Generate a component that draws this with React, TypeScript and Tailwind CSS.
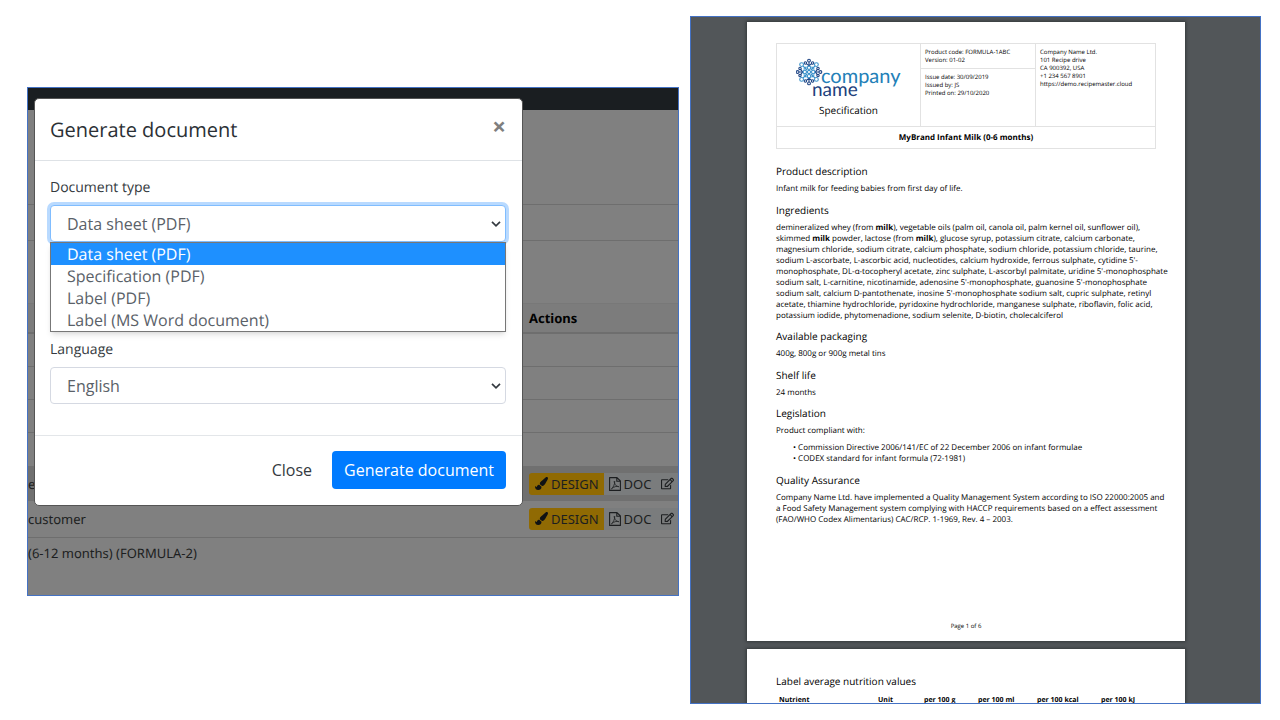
import { FaPaintBrush, FaRegEdit } from "react-icons/fa";

const documentTypes = [
  "Data sheet (PDF)",
  "Specification (PDF)",
  "Label (PDF)",
  "Label (MS Word document)",
];

function Chevron() {
  return (
    <svg viewBox="0 0 10 8" className="pointer-events-none absolute top-1/2 right-[5px] h-2 w-[10px] -translate-y-1/2" fill="none" stroke="#343a40" strokeWidth="1.7">
      <path d="M1 1.8 5 5.8 9 1.8" />
    </svg>
  );
}

function PdfIcon() {
  return (
    <svg viewBox="0 0 12 14" className="h-[14px] w-3" fill="none" stroke="currentColor" strokeLinejoin="round">
      <path d="M.6.6H8L11.4 4V13.4H.6ZM7.8.6V4.2H11.4" strokeWidth="1.1" />
      <path d="M2.4 11.8C4 11 6 7 5.7 4.3C5.4 3.4 4.9 4.6 5.6 6.2C6.4 8.4 8 9.8 9.8 9.7C9 8.8 5.2 9.3 2.4 11.8Z" strokeWidth=".8" />
    </svg>
  );
}

function Actions() {
  return (
    <div className="flex h-[22px] w-max items-stretch">
      <button className="flex items-center gap-[3px] rounded-l-[3px] bg-[#906a03] pr-[5px] pl-1.5">
        <FaPaintBrush className="size-[13px] text-[#101214]" />
        DESIGN
      </button>
      <button className="flex items-center gap-[3px] bg-[#7a7c7d] px-[5px]">
        <PdfIcon />
        DOC
      </button>
      <button aria-label="Edit" className="flex items-center bg-[#7a7c7d] px-[5px]">
        <FaRegEdit className="size-[13px]" />
      </button>
    </div>
  );
}

function Backdrop() {
  return (
    <div className="w-full font-['Noto_Sans',sans-serif] text-[13px] leading-5 text-[#1c1e20] [text-rendering:geometricPrecision]">
      <div className="h-[22px] bg-[#1a1e21]" />
      <div className="h-[95px] border-b border-[#6e6e6e]" />
      <div className="h-9 border-b border-[#6e6e6e]" />
      <div className="h-[63px] border-b border-[#787878]" />
      <table className="w-full table-fixed border-collapse text-left">
        <colgroup>
          <col />
          <col className="w-[149px]" />
        </colgroup>
        <thead>
          <tr className="h-[29px] border-b-2 border-[#6e6e6e] bg-[#7c7c7c]">
            <td />
            <th className="font-bold text-black">Actions</th>
          </tr>
        </thead>
        <tbody>
          <tr className="h-[33px] border-b border-[#6e6e6e]"><td /><td /></tr>
          <tr className="h-[33px] border-b border-[#6e6e6e]"><td /><td /></tr>
          <tr className="h-[33px] border-b border-[#6e6e6e]"><td /><td /></tr>
          <tr className="h-[34px]"><td /><td /></tr>
          <tr className="h-[35px] bg-[#707070]"><td>er</td><td><Actions /></td></tr>
          <tr className="h-9 border-b border-[#6e6e6e]"><td>customer</td><td><Actions /></td></tr>
          <tr className="h-[31px]"><td>(6-12 months) (FORMULA-2)</td><td /></tr>
        </tbody>
      </table>
    </div>
  );
}

const labelClass = "block text-sm leading-6 text-[#343a40]";
const selectClass =
  "h-[37px] w-full appearance-none rounded border bg-white pl-4 text-base text-[#5a6168] outline-none";

function Modal() {
  return (
    <div role="dialog" aria-labelledby="dialog-title" className="absolute top-[10px] left-[6px] w-[489px] rounded-[5px] border border-[#555] bg-white font-['Open_Sans',sans-serif] [text-rendering:geometricPrecision]">
      <header className="flex h-[62px] items-center justify-between border-b border-[#dee2e6] pr-4 pl-[15px]">
        <h2 id="dialog-title" className="text-xl text-[#2b3035]">Generate document</h2>
        <button aria-label="Close dialog" className="pb-2 text-2xl leading-7 font-bold text-[#7f7f7f]">×</button>
      </header>
      <div className="pt-[15px] pr-4 pb-[31px] pl-[15px]">
        <div className="relative">
          <label htmlFor="type" className={labelClass}>Document type</label>
          <div className="relative mt-[5px]">
            <select id="type" className={selectClass + " border-[#80bdff] ring-3 ring-[#b9daff]"}>
              {documentTypes.map((t) => <option key={t}>{t}</option>)}
            </select>
            <Chevron />
          </div>
          <ul role="listbox" className="absolute top-full z-10 w-full border border-[#777] bg-white text-base leading-[22px] text-[#5a6168] shadow-md">
            {documentTypes.map((t, i) => (
              <li key={t} role="option" aria-selected={i === 0} className={i === 0 ? "bg-[#1e90ff] pl-4 text-white" : "pl-4"}>{t}</li>
            ))}
          </ul>
        </div>
        <div className="mt-3.5 pt-[30px]">
          <select aria-label="Format" className={selectClass + " border-[#ced4da]"} />
        </div>
        <div className="mt-[15px]">
          <label htmlFor="language" className={labelClass}>Language</label>
          <div className="relative mt-[5px]">
            <select id="language" className={selectClass + " border-[#d5d9e2]"}>
              <option>English</option>
            </select>
            <Chevron />
          </div>
        </div>
      </div>
      <footer className="flex h-[70px] items-center justify-end gap-2 border-t border-[#e3e6e9] pr-4 pb-0.5 pl-[15px] text-base">
        <button className="px-3 text-[#343a40]">Close</button>
        <button className="h-[38px] rounded bg-[#007bff] px-3 text-white">Generate document</button>
      </footer>
    </div>
  );
}

function Logo() {
  const quarters = [0, 90, 180, 270];
  return (
    <svg viewBox="0 0 106 44" className="h-11 w-[106px]" role="img" aria-label="company name">
      <g transform="translate(13 14)" fill="none" strokeWidth="1.1">
        {quarters.map((a) => (
          <g key={a} transform={`rotate(${a})`}>
            <g stroke="#1f4585">
              <circle cy="-11.4" r="1.4" />
              <path d="M0-10V-6.5M-2.6-8.4 0-6.2 2.6-8.4" />
              <circle cx="-3.6" cy="-9" r="1.2" />
              <circle cx="3.6" cy="-9" r="1.2" />
            </g>
            <g stroke="#3d93cb">
              <circle cx="7.4" cy="-7.4" r="1.9" />
              <path d="M6-6 2-2M3-5.6V-3H5.6" />
              <circle cy="-4.2" r="1.7" />
            </g>
          </g>
        ))}
        <circle r="1.6" stroke="#3d93cb" />
      </g>
      <text x="25" y="25" fontSize="20" fill="#2380b8" fontFamily="Lato, sans-serif">company</text>
      <text x="16" y="38" fontSize="19" fill="#213f7c" fontFamily="Lato, sans-serif">name</text>
    </svg>
  );
}

const headingClass = "text-[10px] leading-4";
const bodyClass = "mt-1 text-[8px] leading-[11px]";
const cellClass = "border border-[#e2e2e2] px-1";

function Page() {
  return (
    <article className="flex h-[619px] flex-col bg-white px-[29px] pt-[21px] shadow-[0_0_3px_1px_#33383a]">
      <table className="w-full table-fixed border-collapse text-left text-[6px] leading-2">
        <colgroup>
          <col className="w-[144px]" />
          <col className="w-[115px]" />
          <col />
        </colgroup>
        <tbody>
          <tr>
            <td rowSpan={2} className={cellClass + " h-[83px] pt-1.5 align-middle"}>
              <div className="flex flex-col items-center">
                <Logo />
                <span className="text-[10px] leading-4">Specification</span>
              </div>
            </td>
            <td className={cellClass + " h-[25px] align-middle"}>Product code: FORMULA-1ABC<br />Version: 01-02</td>
            <td rowSpan={2} className={cellClass + " pt-1 align-top"}>
              Company Name Ltd.<br />101 Recipe drive<br />CA 900392, USA<br />+1 234 567 8901<br />https://demo.recipemaster.cloud
            </td>
          </tr>
          <tr>
            <td className={cellClass + " pt-1 align-top"}>Issue date: 30/09/2019<br />Issued by: JS<br />Printed on: 29/10/2020</td>
          </tr>
          <tr>
            <th colSpan={3} className={cellClass + " h-[22px] text-center text-[8px] font-bold"}>MyBrand Infant Milk (0-6 months)</th>
          </tr>
        </tbody>
      </table>
      <section className="mt-3.5">
        <h3 className={headingClass}>Product description</h3>
        <p className={bodyClass}>Infant milk for feeding babies from first day of life.</p>
      </section>
      <section className="mt-2">
        <h3 className={headingClass}>Ingredients</h3>
        <p className={bodyClass + " whitespace-nowrap"}>
          demineralized whey (from <b>milk</b>), vegetable oils (palm oil, canola oil, palm kernel oil, sunflower oil),<br />
          skimmed <b>milk</b> powder, lactose (from <b>milk</b>), glucose syrup, potassium citrate, calcium carbonate,<br />
          magnesium chloride, sodium citrate, calcium phosphate, sodium chloride, potassium chloride, taurine,<br />
          sodium L-ascorbate, L-ascorbic acid, nucleotides, calcium hydroxide, ferrous sulphate, cytidine 5'-<br />
          monophosphate, DL-α-tocopheryl acetate, zinc sulphate, L-ascorbyl palmitate, uridine 5'-monophosphate<br />
          sodium salt, L-carnitine, nicotinamide, adenosine 5'-monophosphate, guanosine 5'-monophosphate<br />
          sodium salt, calcium D-pantothenate, inosine 5'-monophosphate sodium salt, cupric sulphate, retinyl<br />
          acetate, thiamine hydrochloride, pyridoxine hydrochloride, manganese sulphate, riboflavin, folic acid,<br />
          potassium iodide, phytomenadione, sodium selenite, D-biotin, cholecalciferol
        </p>
      </section>
      <section className="mt-[7px]">
        <h3 className={headingClass}>Available packaging</h3>
        <p className={bodyClass}>400g, 800g or 900g metal tins</p>
      </section>
      <section className="mt-2">
        <h3 className={headingClass}>Shelf life</h3>
        <p className={bodyClass}>24 months</p>
      </section>
      <section className="mt-[7px]">
        <h3 className={headingClass}>Legislation</h3>
        <p className={bodyClass}>Product compliant with:</p>
        <ul className="mt-1.5 pl-[17px] text-[8px] leading-[11px]">
          <li>• Commission Directive 2006/141/EC of 22 December 2006 on infant formulae</li>
          <li>• CODEX standard for infant formula (72-1981)</li>
        </ul>
      </section>
      <section className="mt-2">
        <h3 className={headingClass}>Quality Assurance</h3>
        <p className={bodyClass + " whitespace-nowrap"}>
          Company Name Ltd. have implemented a Quality Management System according to ISO 22000:2005 and<br />
          a Food Safety Management system complying with HACCP requirements based on a effect assessment<br />
          (FAO/WHO Codex Alimentarius) CAC/RCP. 1-1969, Rev. 4 – 2003.
        </p>
      </section>
      <p className="mt-auto pb-[9px] text-center text-[6px] leading-3">Page 1 of 6</p>
    </article>
  );
}

export default function App() {
  return (
    <main className="flex min-h-screen items-start bg-white pt-4 pb-4 pl-[27px]">
      <section className="relative mt-[71px] h-[509px] w-[652px] shrink-0 overflow-hidden border border-[#4472c4] bg-[#808080]">
        <Backdrop />
        <Modal />
      </section>
      <section className="ml-[11px] h-[688px] w-[571px] shrink-0 overflow-hidden border border-[#4472c4] bg-[#525659] font-['Open_Sans',sans-serif] text-black [text-rendering:geometricPrecision]">
        <div className="mr-[75px] ml-[56px] flex flex-col gap-2 pt-[5px]">
          <Page />
          <article className="bg-white px-[29px] pt-6 pb-10 shadow-[0_0_3px_1px_#33383a]">
            <h3 className={headingClass}>Label average nutrition values</h3>
            <table className="mt-1.5 w-full table-fixed text-left text-[7px] leading-3">
              <thead>
                <tr>
                  <th className="w-[102px] pl-[3px]">Nutrient</th>
                  <th className="w-[46px]">Unit</th>
                  <th className="w-[54px]">per 100 g</th>
                  <th className="w-[59px]">per 100 ml</th>
                  <th className="w-[64px]">per 100 kcal</th>
                  <th>per 100 kJ</th>
                </tr>
              </thead>
            </table>
          </article>
        </div>
      </section>
    </main>
  );
}
